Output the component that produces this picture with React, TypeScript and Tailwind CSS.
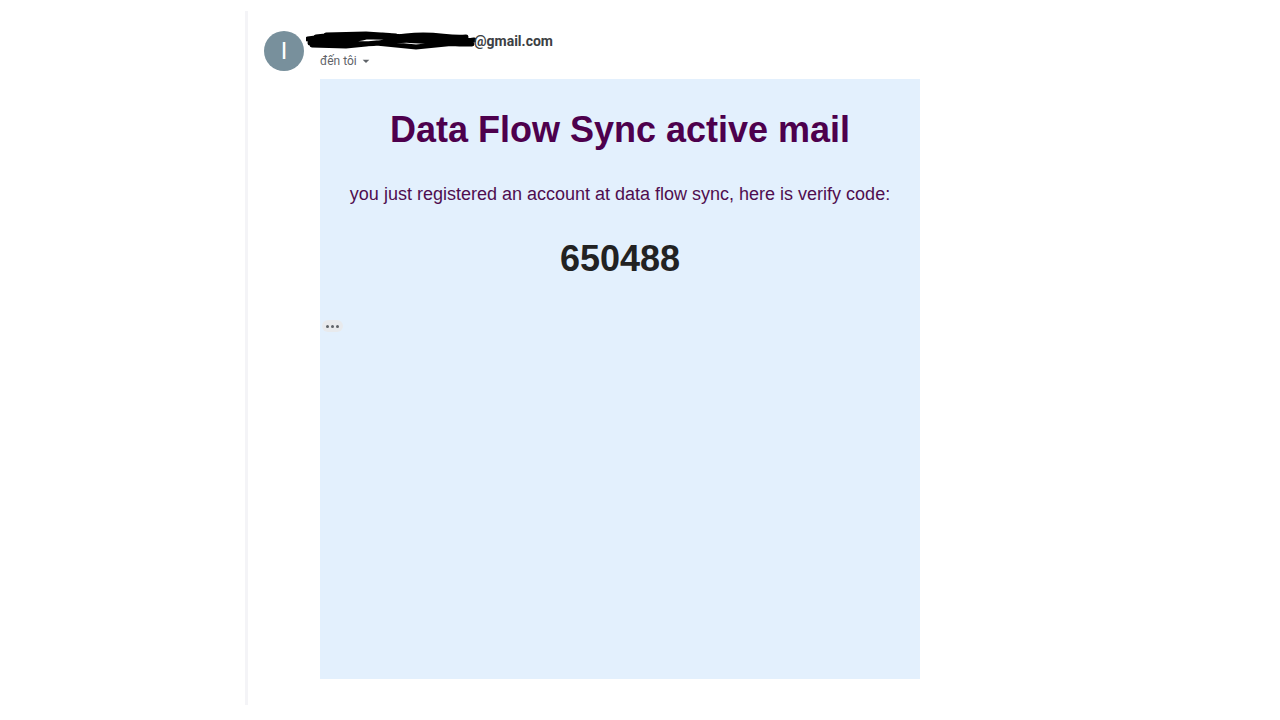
export default function App() {
  return (
    <div className="w-[1280px] h-[720px] bg-white relative overflow-hidden font-['Liberation_Sans',Arial,sans-serif]">
      <div className="flex h-full">
        <div className="w-[245px] shrink-0" />
        <div className="w-[3px] mt-[11px] h-[694px] bg-[#f4f4f7]" />
        <div className="flex flex-col pl-[16px] pt-[31px]">
          <div className="flex">
            <div className="w-10 h-10 rounded-full bg-[#78909c] flex items-center justify-center text-white text-[24px] font-['Roboto',sans-serif] font-normal">
              I
            </div>
            <div className="ml-[2px] flex flex-col">
              <div className="flex items-center h-[20px]">
                <Scribble />
                <span className="text-[14px] font-bold text-[#3c4043] font-['Roboto',sans-serif] -ml-[2px]">@gmail.com</span>
              </div>
              <div className="flex items-center ml-[14px] mt-[1px] text-[12px] text-[#5f6368] font-['Roboto',sans-serif]">
                <span>đến tôi</span>
                <svg width="16" height="16" viewBox="0 0 24 24" className="ml-[1px]">
                  <path d="M7 10l5 5 5-5z" fill="#5f6368" />
                </svg>
              </div>
            </div>
          </div>
          <div className="ml-[56px] mt-[8px] w-[600px] h-[600px] bg-[#e3f0fd] flex flex-col">
            <h1 className="text-center text-[36px] font-bold text-[#4d004d] mt-[29px] leading-[44px]">
              Data Flow Sync active mail
            </h1>
            <p className="text-center text-[18px] text-[#4f0d4f] mt-[31px] leading-[22px]">
              you just registered an account at data flow sync, here is verify code:
            </p>
            <div className="text-center text-[36px] font-bold text-[#222222] mt-[32px] leading-[44px]">650488</div>
            <div className="mt-[39px] ml-[2px] w-[21px] h-[12px] rounded-full bg-[#e8eaed] flex items-center justify-center gap-[2px]">
              <span className="w-[3px] h-[3px] rounded-full bg-[#5f6368]" />
              <span className="w-[3px] h-[3px] rounded-full bg-[#5f6368]" />
              <span className="w-[3px] h-[3px] rounded-full bg-[#5f6368]" />
            </div>
          </div>
        </div>
      </div>
    </div>
  );
}

function Scribble() {
  return (
    <svg width="170" height="20" viewBox="0 0 170 20">
      <path
        d="M2 8 C20 4 40 12 60 6 S100 10 120 7 S150 12 168 9 M4 12 C30 10 50 16 80 11 S130 14 166 13 M10 6 C40 2 70 9 100 5 S140 8 160 6 M6 14 L40 15 L70 12 L110 16 L150 12 M20 4 L60 3 L90 5"
        stroke="#000"
        strokeWidth="5"
        fill="none"
        strokeLinecap="round"
      />
    </svg>
  );
}
